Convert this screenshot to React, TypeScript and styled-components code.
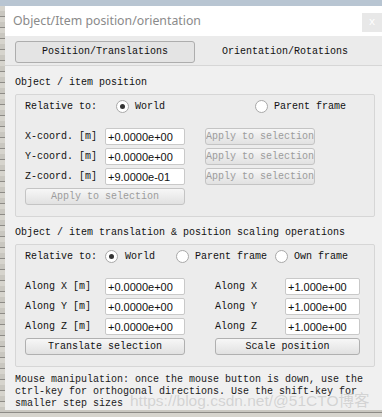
import React from "react";
import styled, { createGlobalStyle } from "styled-components";

const GlobalStyle = createGlobalStyle`
    html, body {
        margin: 0;
        padding: 0;
    }
    body {
        width: 382px;
        height: 417px;
        overflow: hidden;
    }
`

const MONO = `"Liberation Mono", "DejaVu Sans Mono", monospace`

export default function App() {
    return (
        <>
            <GlobalStyle />
            <Desktop>
                <Window>
                    <TitleBar>
                        <Title>Object/Item position/orientation</Title>
                        <CloseBox>x</CloseBox>
                    </TitleBar>
                    <TabBar>
                        <Tab $active>Position/Translations</Tab>
                        <Tab>Orientation/Rotations</Tab>
                    </TabBar>
                    <Content>
                        <SectionLabel>Object / item position</SectionLabel>
                        <GroupBox>
                            <RadioRow $cols="91px 139px auto">
                                <Label>Relative to:</Label>
                                <RadioOption $gap={6}><Radio $checked />World</RadioOption>
                                <RadioOption $gap={6}><Radio />Parent frame</RadioOption>
                            </RadioRow>
                            <CoordGrid>
                                <Label>X-coord. [m]</Label>
                                <ValueInput readOnly value="+0.0000e+00" />
                                <SmallButton disabled>Apply to selection</SmallButton>
                                <Label>Y-coord. [m]</Label>
                                <ValueInput readOnly value="+0.0000e+00" />
                                <SmallButton disabled>Apply to selection</SmallButton>
                                <Label>Z-coord. [m]</Label>
                                <ValueInput readOnly value="+9.0000e-01" />
                                <SmallButton disabled>Apply to selection</SmallButton>
                                <WideButton disabled $col="1 / 3">Apply to selection</WideButton>
                            </CoordGrid>
                        </GroupBox>

                        <SectionLabel $top={9}>Object / item translation &amp; position scaling operations</SectionLabel>
                        <GroupBox>
                            <RadioRow $cols="80px 71px 99px auto">
                                <Label>Relative to:</Label>
                                <RadioOption $gap={7}><Radio $checked />World</RadioOption>
                                <RadioOption $gap={6}><Radio />Parent frame</RadioOption>
                                <RadioOption $gap={6}><Radio />Own frame</RadioOption>
                            </RadioRow>
                            <OpsGrid>
                                <Label>Along X [m]</Label>
                                <ValueInput readOnly value="+0.0000e+00" />
                                <Label $col="4">Along X</Label>
                                <ValueInput readOnly value="+1.000e+00" />
                                <Label>Along Y [m]</Label>
                                <ValueInput readOnly value="+0.0000e+00" />
                                <Label $col="4">Along Y</Label>
                                <ValueInput readOnly value="+1.000e+00" />
                                <Label>Along Z [m]</Label>
                                <ValueInput readOnly value="+0.0000e+00" />
                                <Label $col="4">Along Z</Label>
                                <ValueInput readOnly value="+1.000e+00" />
                                <WideButton $col="1 / 3">Translate selection</WideButton>
                                <WideButton $col="4 / 6">Scale position</WideButton>
                            </OpsGrid>
                        </GroupBox>

                        <Note>
                            Mouse manipulation: once the mouse button is down, use the<br />
                            ctrl-key for orthogonal directions. Use the shift-key for<br />
                            smaller step sizes
                        </Note>
                    </Content>
                    <Watermark>https://blog.csdn.net/@51CTO博客</Watermark>
                </Window>
            </Desktop>
        </>
    )
}

const Desktop = styled.div`
    width: 382px;
    height: 417px;
    box-sizing: border-box;
    padding: 6px 0 0 5px;
    overflow: hidden;
    background:
        linear-gradient(to bottom, #b8c5d2 0, #b8c5d2 6px, transparent 6px),
        repeating-linear-gradient(to bottom, #c9c7c0 0, #c9c7c0 5px, #8d8b86 5px, #8d8b86 6px, #d6d4cd 6px, #d6d4cd 11px);
`
const Window = styled.div`
    position: relative;
    width: 377px;
    height: 404px;
    background: #f0f0f0;
    display: flex;
    flex-direction: column;
    overflow: hidden;
`
const TitleBar = styled.div`
    height: 30px;
    flex-shrink: 0;
    background: #ffffff;
    display: flex;
    justify-content: space-between;
    align-items: center;
    padding-left: 8px;
`
const Title = styled.div`
    font-family: "Noto Sans", "Open Sans", sans-serif;
    font-size: 12.3px;
    color: #8a8a8a;
    margin-top: -1px;
`
const CloseBox = styled.div`
    align-self: flex-start;
    margin-top: 7px;
    width: 20px;
    height: 19px;
    background: #e8e8e8;
    color: #ffffff;
    font-family: ${MONO};
    font-size: 11px;
    line-height: 19px;
    text-align: center;
`
const TabBar = styled.div`
    height: 30px;
    flex-shrink: 0;
    box-sizing: border-box;
    background: #ebebeb;
    border-bottom: 1px solid #d6d6d6;
    display: flex;
    align-items: flex-start;
    padding: 5px 0 0 10px;
`
const Tab = styled.div<{ $active?: boolean }>`
    width: 180px;
    height: 22px;
    box-sizing: border-box;
    border: 1px solid ${p => p.$active ? '#adadad' : 'transparent'};
    border-radius: 3px;
    background: ${p => p.$active ? '#e4e4e4' : 'transparent'};
    font-family: ${MONO};
    font-size: 10px;
    line-height: 20px;
    text-align: center;
    color: #111;
`
const Content = styled.div`
    display: flex;
    flex-direction: column;
    padding: 10px 10px 0;
`
const SectionLabel = styled.div<{ $top?: number }>`
    margin-top: ${p => p.$top || 0}px;
    margin-bottom: 4px;
    font-family: ${MONO};
    font-size: 10px;
    line-height: 14px;
    color: #111;
    white-space: nowrap;
`
const GroupBox = styled.div`
    width: 360px;
    box-sizing: border-box;
    border: 1px solid #d6d6d6;
    border-radius: 2px;
    background: #ececec;
    padding: 2px 9px 11px;
`
const RadioRow = styled.div<{ $cols: string }>`
    display: grid;
    grid-template-columns: ${p => p.$cols};
    align-items: center;
    height: 18px;
`
const Label = styled.div<{ $col?: string }>`
    grid-column: ${p => p.$col || 'auto'};
    font-family: ${MONO};
    font-size: 10px;
    line-height: 17px;
    color: #111;
    white-space: nowrap;
`
const RadioOption = styled.div<{ $gap: number }>`
    display: flex;
    align-items: center;
    gap: ${p => p.$gap}px;
    font-family: ${MONO};
    font-size: 10px;
    color: #111;
    white-space: nowrap;
`
const Radio = styled.span<{ $checked?: boolean }>`
    position: relative;
    width: 13px;
    height: 13px;
    box-sizing: border-box;
    border-radius: 50%;
    border: 1px solid #a8a8a8;
    background: #ffffff;
    flex-shrink: 0;
    &::after {
        content: '';
        display: ${p => p.$checked ? 'block' : 'none'};
        position: absolute;
        left: 3px;
        top: 3px;
        width: 5px;
        height: 5px;
        border-radius: 50%;
        background: #333;
    }
`
const CoordGrid = styled.div`
    display: grid;
    grid-template-columns: 80px 80px 20px 110px;
    grid-auto-rows: 17px;
    row-gap: 3px;
    margin-top: 13px;
`
const OpsGrid = styled.div`
    display: grid;
    grid-template-columns: 80px 80px 30px 70px 75px;
    grid-auto-rows: 17px;
    row-gap: 3px;
    margin-top: 13px;
`
const ValueInput = styled.input`
    width: 100%;
    height: 17px;
    box-sizing: border-box;
    margin: 0;
    border: 1px solid #c9c9c9;
    border-radius: 2px;
    background: #ffffff;
    padding: 0 0 0 2px;
    font-family: "Liberation Sans", Arial, sans-serif;
    font-size: 11px;
    color: #111;
    outline: none;
`
const ButtonBase = styled.button`
    height: 17px;
    box-sizing: border-box;
    margin: 0;
    padding: 0;
    border: 1px solid #b0b0b0;
    border-radius: 3px;
    background: linear-gradient(to bottom, #f7f7f7, #e1e1e1);
    font-family: ${MONO};
    font-size: 10px;
    line-height: 15px;
    color: #111;
    white-space: nowrap;
    overflow: hidden;
    text-align: center;
    &:disabled {
        color: #9c9c9c;
        border-color: #c4c4c4;
    }
`
const SmallButton = styled(ButtonBase)`
    width: 110px;
    grid-column: 4;
`
const WideButton = styled(ButtonBase)<{ $col: string }>`
    grid-column: ${p => p.$col};
    width: 100%;
`
const Note = styled.div`
    margin-top: 7px;
    font-family: ${MONO};
    font-size: 10px;
    line-height: 12px;
    color: #1a1a1a;
    white-space: nowrap;
`
const Watermark = styled.div`
    position: absolute;
    left: 125px;
    top: 382px;
    font-family: "Liberation Sans", "Noto Sans CJK SC", sans-serif;
    font-size: 15.5px;
    color: rgba(175, 175, 175, 0.45);
    white-space: nowrap;
    pointer-events: none;
`
